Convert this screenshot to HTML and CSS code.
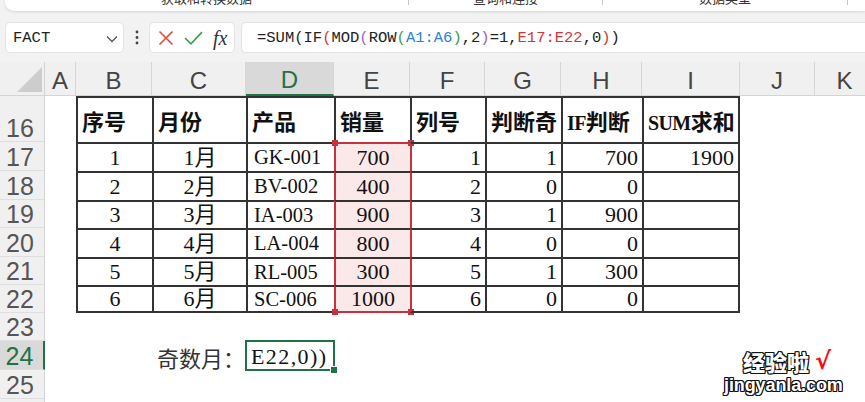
FILE: index.html
```html
<!DOCTYPE html>
<html lang="zh-CN">
<head>
<meta charset="utf-8">
<title>Sheet</title>
<link rel="stylesheet" href="styles.css">
</head>
<body>
<div class="app">
  <div class="ribbon">
    <div class="grp g1"><span>获取和转换数据</span></div>
    <div class="sep"></div>
    <div class="grp g2"><span>查询和连接</span></div>
    <div class="sep"></div>
    <div class="grp g3"><span>数据类型</span></div>
    <div class="sep"></div>
    <div class="grp g4"></div>
  </div>

  <div class="fbar">
    <div class="namebox">
      <span>FACT</span>
      <svg class="chev" width="12" height="8" viewBox="0 0 12 8"><path d="M1 1.5 L6 6.5 L11 1.5" fill="none" stroke="#555" stroke-width="1.3"/></svg>
    </div>
    <div class="dots">
      <svg width="4" height="15" viewBox="0 0 4 15"><circle cx="2" cy="2" r="1.4" fill="#444"/><circle cx="2" cy="7.5" r="1.4" fill="#444"/><circle cx="2" cy="13" r="1.4" fill="#444"/></svg>
    </div>
    <div class="fxbox">
      <svg width="16" height="16" viewBox="0 0 16 16"><path d="M1.5 1.5 L14.5 14.5 M14.5 1.5 L1.5 14.5" stroke="#e3463f" stroke-width="1.6" fill="none"/></svg>
      <svg class="chk" width="19" height="14" viewBox="0 0 19 14"><path d="M1 7 L7 12.8 L18 1.2" stroke="#3fa04b" stroke-width="1.7" fill="none"/></svg>
      <span class="fx">fx</span>
    </div>
    <div class="formula"><span>=SUM(IF</span><span class="pr">(</span><span>MOD</span><span class="pp">(</span><span>ROW</span><span class="pg">(</span><span class="pb">A1:A6</span><span class="pg">)</span><span>,2</span><span class="pp">)</span><span>=1,</span><span class="pr">E17:E22</span><span>,0</span><span class="pr">)</span><span>)</span></div>
  </div>

  <div class="sheet">
    <div class="corner"><div class="tri"></div></div>
    <div class="ch">A</div>
    <div class="ch">B</div>
    <div class="ch">C</div>
    <div class="ch act">D</div>
    <div class="ch">E</div>
    <div class="ch">F</div>
    <div class="ch">G</div>
    <div class="ch">H</div>
    <div class="ch">I</div>
    <div class="ch">J</div>
    <div class="ch">K</div>

    <div class="rh">16</div>
    <div class="t th colB">序号</div>
    <div class="t th">月份</div>
    <div class="t th">产品</div>
    <div class="t th">销量</div>
    <div class="t th">列号</div>
    <div class="t th">判断奇</div>
    <div class="t th"><span class="lat">IF</span>判断</div>
    <div class="t th last"><span class="lat">SUM</span>求和</div>

    <div class="rh">17</div>
    <div class="t c colB">1</div>
    <div class="t c">1月</div>
    <div class="t l code">GK-001</div>
    <div class="t c sel stop">700</div>
    <div class="t r selr">1</div>
    <div class="t r">1</div>
    <div class="t r">700</div>
    <div class="t r last">1900</div>

    <div class="rh">18</div>
    <div class="t c colB">2</div>
    <div class="t c">2月</div>
    <div class="t l code">BV-002</div>
    <div class="t c sel">400</div>
    <div class="t r selr">2</div>
    <div class="t r">0</div>
    <div class="t r">0</div>
    <div class="t r last"></div>

    <div class="rh">19</div>
    <div class="t c colB">3</div>
    <div class="t c">3月</div>
    <div class="t l code">IA-003</div>
    <div class="t c sel">900</div>
    <div class="t r selr">3</div>
    <div class="t r">1</div>
    <div class="t r">900</div>
    <div class="t r last"></div>

    <div class="rh">20</div>
    <div class="t c colB">4</div>
    <div class="t c">4月</div>
    <div class="t l code">LA-004</div>
    <div class="t c sel">800</div>
    <div class="t r selr">4</div>
    <div class="t r">0</div>
    <div class="t r">0</div>
    <div class="t r last"></div>

    <div class="rh">21</div>
    <div class="t c colB">5</div>
    <div class="t c">5月</div>
    <div class="t l code">RL-005</div>
    <div class="t c sel">300</div>
    <div class="t r selr">5</div>
    <div class="t r">1</div>
    <div class="t r">300</div>
    <div class="t r last"></div>

    <div class="rh">22</div>
    <div class="t c colB bot">6</div>
    <div class="t c bot">6月</div>
    <div class="t l code bot">SC-006</div>
    <div class="t c sel sbot bot">1000</div>
    <div class="t r selr bot">6</div>
    <div class="t r bot">0</div>
    <div class="t r bot">0</div>
    <div class="t r last bot"></div>

    <div class="rh">23</div>

    <div class="rh act">24</div>
    <div class="label colC">奇数月：</div>
    <div class="active">E22,0))</div>

    <div class="rh">25</div>
    <div class="rh">26</div>
  </div>

  <div class="wm">
    <div class="wm1"><span class="wmcn">经验啦</span><span class="wmchk">√</span></div>
    <div class="wm2">jingyanla.com</div>
  </div>
</div>
</body>
</html>
```

FILE: styles.css
```css
* { box-sizing: border-box; margin: 0; padding: 0; }

body {
  width: 865px;
  height: 402px;
  overflow: hidden;
  background: #f2f2f2;
  font-family: "Noto Sans CJK SC", sans-serif;
}

.app {
  position: relative;
  height: 402px;
  overflow: hidden;
}

/* ribbon strip (cut off at top) */
.ribbon {
  display: flex;
  margin-left: 5px;
  height: 11px;
  background: #fff;
  border-bottom-left-radius: 9px;
  box-shadow: 0 1px 3px rgba(0, 0, 0, 0.12);
  overflow: hidden;
}
.grp {
  flex: none;
  display: flex;
  justify-content: center;
  overflow: hidden;
}
.grp span {
  font-size: 13px;
  line-height: 13px;
  margin-top: -9px;
  color: #333;
  white-space: nowrap;
}
.g1 { width: 403px; }
.g2 { width: 193px; }
.g3 { width: 244px; }
.g4 { flex: 1; }
.sep {
  flex: none;
  width: 1px;
  height: 5px;
  background: #c8c8c8;
}

/* formula bar */
.fbar {
  display: flex;
  align-items: center;
  height: 31px;
  margin-top: 11px;
  padding-left: 5px;
}
.namebox {
  flex: none;
  width: 119px;
  height: 31px;
  background: #fff;
  border: 1px solid #e3e3e3;
  border-radius: 5px;
  display: flex;
  align-items: center;
  justify-content: space-between;
  padding: 1px 5px 0 7px;
}
.namebox span {
  font-family: "Liberation Mono", monospace;
  font-size: 15.5px;
  color: #222;
}
.chev { margin-top: 1px; }
.dots {
  flex: none;
  width: 25px;
  display: flex;
  justify-content: center;
  padding-left: 1px;
}
.fxbox {
  flex: none;
  width: 86px;
  height: 31px;
  background: #fff;
  border: 1px solid #e3e3e3;
  border-radius: 5px;
  display: flex;
  align-items: center;
  padding-left: 8px;
}
.chk { margin-left: 10px; }
.fx {
  margin-left: 10px;
  font-family: "Liberation Serif", serif;
  font-style: italic;
  font-size: 20px;
  color: #333;
  line-height: 1;
}
.formula {
  flex: 1;
  margin-left: 6px;
  height: 31px;
  background: #fff;
  border: 1px solid #e3e3e3;
  border-right: none;
  border-radius: 5px 0 0 5px;
  padding: 1px 0 0 15px;
  display: flex;
  align-items: center;
  font-family: "Liberation Mono", monospace;
  font-size: 15.5px;
  color: #222;
  white-space: pre;
}
.pr { color: #d0363a; }
.pp { color: #9b5fc8; }
.pg { color: #3d9a45; }
.pb { color: #2f7fd0; }

/* sheet grid */
.sheet {
  margin-top: 9px;
  display: grid;
  grid-template-columns: 45px 31px 76px 94px 88px 76px 75px 76px 81px 98px 75px 60px;
  grid-template-rows: 34px 46px 29px 29px 28px 29px 28px 28px 28px 29px 29px 30px;
  background: #fff;
}

.corner {
  grid-column: 1;
  background: #f0f0f0;
  border-right: 1px solid #d4d4d4;
  border-bottom: 1px solid #d4d4d4;
  display: flex;
  align-items: flex-end;
  justify-content: flex-end;
  padding: 0 2px 3px 0;
}
.tri {
  width: 0;
  height: 0;
  border-left: 25px solid transparent;
  border-bottom: 25px solid #cdcdcd;
}

.ch {
  background: #f0f0f0;
  border-right: 1px solid #d6d6d6;
  border-bottom: 1px solid #d4d4d4;
  font-family: "Liberation Sans", Arial, sans-serif;
  font-size: 24px;
  color: #444;
  display: flex;
  align-items: center;
  justify-content: center;
  padding-top: 4px;
  line-height: 1;
}
.ch.act {
  background: #d9d9d9;
  color: #1f7246;
  border-bottom: 2px solid #1f7246;
}

.rh {
  grid-column: 1;
  background: #f0f0f0;
  border-right: 1px solid #d4d4d4;
  border-bottom: 1px solid #dedede;
  font-family: "Liberation Sans", Arial, sans-serif;
  font-size: 25px;
  line-height: 1;
  color: #555;
  display: flex;
  align-items: flex-end;
  justify-content: center;
  padding-right: 4px;
}
.rh.act {
  background: #d9d9d9;
  color: #1f7246;
  border-right: 2px solid #1f7246;
}

/* table cells */
.t {
  position: relative;
  border-left: 2px solid #333;
  border-top: 2px solid #333;
  font-family: "Liberation Serif", "Noto Sans CJK SC", serif;
  font-size: 22px;
  line-height: 1;
  color: #111;
  display: flex;
  align-items: center;
  white-space: nowrap;
}
.colB { grid-column: 3; }
.colC { grid-column: 4; }
.last { border-right: 2px solid #333; }
.bot { border-bottom: 2px solid #333; }

.th {
  font-weight: bold;
  font-size: 22px;
  padding: 5px 0 0 4px;
}
.th .lat {
  font-size: 20px;
  letter-spacing: -0.6px;
}
.c { justify-content: center; }
.r { justify-content: flex-end; padding-right: 4px; }
.l { justify-content: flex-start; padding-left: 6px; }
.code { font-size: 20.5px; }

/* referenced range E17:E22 */
.sel {
  background: #fbe8e9;
  border-left-color: #c8323c;
}
.selr { border-left-color: #c8323c; }
.stop { border-top-color: #c8323c; }
.sbot { border-bottom-color: #c8323c; }
.stop::before,
.stop::after,
.sbot::before,
.sbot::after {
  content: "";
  position: absolute;
  width: 6px;
  height: 6px;
  background: #c8323c;
}
.stop::before { left: -4px; top: -4px; }
.stop::after { right: -4px; top: -4px; }
.sbot::before { left: -4px; bottom: -4px; }
.sbot::after { right: -4px; bottom: -4px; }

/* row 24 */
.label {
  display: flex;
  align-items: center;
  justify-content: flex-end;
  padding: 2px 1px 0 0;
  font-size: 22px;
  color: #333;
  white-space: nowrap;
}
.active {
  position: relative;
  outline: 2px solid #1f7246;
  outline-offset: -1px;
  display: flex;
  align-items: center;
  padding: 2px 0 0 5px;
  font-family: "Liberation Serif", serif;
  font-size: 22px;
  letter-spacing: 1.4px;
  color: #111;
  white-space: nowrap;
}
.active::after {
  content: "";
  position: absolute;
  right: -4px;
  bottom: -4px;
  width: 6px;
  height: 6px;
  background: #1f7246;
  border: 1px solid #fff;
}

/* watermark */
.wm {
  position: absolute;
  left: 724px;
  top: 348px;
  display: flex;
  flex-direction: column;
  align-items: flex-start;
  gap: 3px;
}
.wm1 {
  display: flex;
  align-items: center;
  padding-left: 19px;
  height: 25px;
}
.wmcn {
  font-family: "Noto Sans CJK SC", sans-serif;
  font-weight: 900;
  font-size: 22px;
  line-height: 22px;
  color: #fff;
  text-shadow: -1px -1px 0 #111, 1px -1px 0 #111, -1px 1px 0 #111, 1px 1px 0 #111,
    0 -1px 0 #111, 0 1px 0 #111, -1px 0 0 #111, 1px 0 0 #111;
}
.wmchk {
  margin-left: 6px;
  font-family: "DejaVu Sans", sans-serif;
  font-weight: bold;
  font-size: 24px;
  line-height: 24px;
  color: #ee1111;
}
.wm2 {
  font-family: "Liberation Sans", Arial, sans-serif;
  font-weight: bold;
  font-size: 18px;
  line-height: 18px;
  color: #fff;
  letter-spacing: -0.1px;
  text-shadow: -1px -1px 0 #111, 1px -1px 0 #111, -1px 1px 0 #111, 1px 1px 0 #111,
    0 -1px 0 #111, 0 1px 0 #111, -1px 0 0 #111, 1px 0 0 #111;
}
```
